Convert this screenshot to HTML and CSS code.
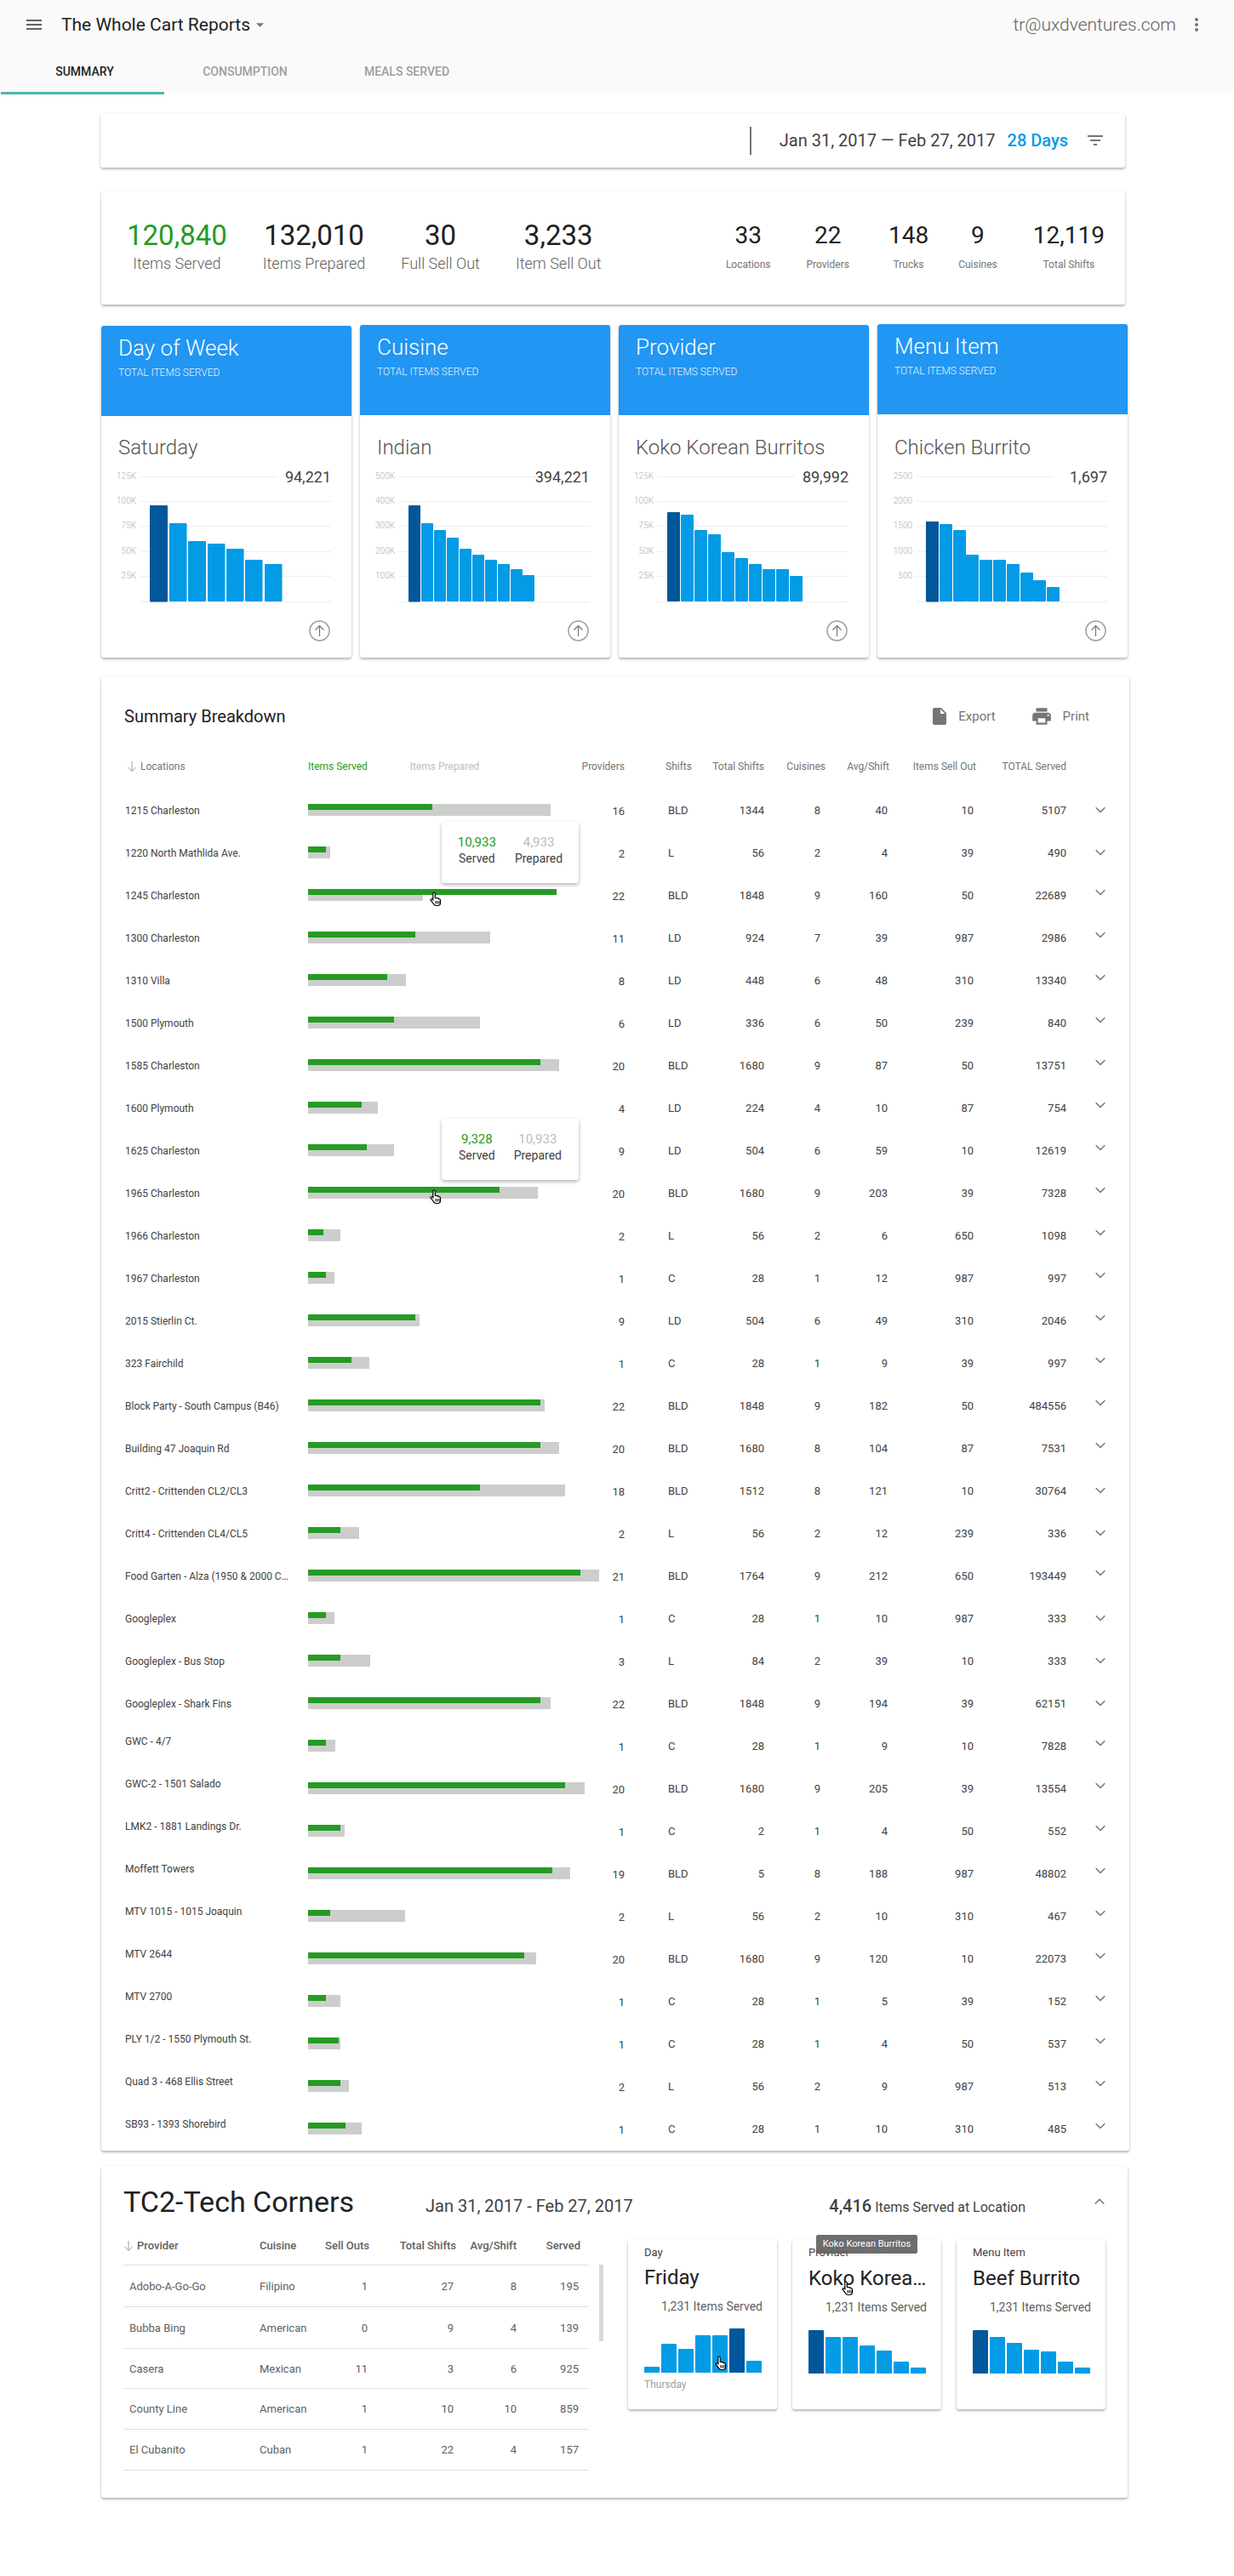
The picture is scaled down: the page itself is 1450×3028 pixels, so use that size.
FILE: index.html
```html
<!DOCTYPE html>
<html lang="en">
<head>
    <meta charset="UTF-8">
    <title>The Whole Cart Reports</title>
    <link rel="stylesheet" href="styles.css">
</head>
<body>
<svg class="sprites" width="0" height="0">
    <symbol id="chev" viewBox="0 0 12 12"><path d="M.7 3.2 6 8.5l5.3-5.3" fill="none" stroke="#757575" stroke-width="1.5"/></symbol>
    <symbol id="chev-up" viewBox="0 0 12 12"><path d="M.7 8.5 6 3.2l5.3 5.3" fill="none" stroke="#757575" stroke-width="1.5"/></symbol>
    <symbol id="sort" viewBox="0 0 12 14"><path d="M6 1v11.5M1.5 8 6 12.5 10.500 8" fill="none" stroke="#9e9e9e" stroke-width="1"/></symbol>
    <symbol id="up" viewBox="0 0 25 25"><circle cx="12.500" cy="12.500" r="11.500" fill="none" stroke="#9e9e9e" stroke-width="1.500"/><path d="M12.500 19V6.500M7.500 11.500l5-5 5 5" fill="none" stroke="#757575" stroke-width="1.200"/></symbol>
    <symbol id="hand" viewBox="0 0 14 18"><path d="M5 1c.8 0 1.300.6 1.300 1.400v5l1-.1c.5 0 .9.2 1 .5.5-.2 1.200 0 1.400.5.6-.2 1.300.1 1.500.7.6-.1 1.300.3 1.300 1.100v3.200c0 1.800-1.300 3.200-3.100 3.200H7.500c-1 0-1.800-.4-2.400-1.200L1.300 10.500c-.5-.6-.3-1.300.2-1.600.5-.3 1.100-.2 1.600.3l.7.7V2.400C3.800 1.600 4.300 1 5 1z" fill="#fff" stroke="#000" stroke-width="1.200"/><path d="M7 11v3.500M9 11v3.500M11 11v3.500" stroke="#000" stroke-width="1"/></symbol>
</svg>

<header class="topbar">
    <div class="topbar-row">
        <svg class="icon menu-icon" viewBox="0 0 24 24"><path d="M3 18h18v-2H3v2zm0-5h18v-2H3v2zm0-7v2h18V6H3z"/></svg>
        <span class="app-title">The Whole Cart Reports</span>
        <svg class="caret" viewBox="0 0 10 5"><path d="M0 0h10L5 5z"/></svg>
        <span class="email">tr@uxdventures.com</span>
        <svg class="icon" viewBox="0 0 24 24"><path d="M12 8c1.100 0 2-.9 2-2s-.9-2-2-2-2 .9-2 2 .9 2 2 2zm0 2c-1.100 0-2 .9-2 2s.9 2 2 2 2-.9 2-2-.9-2-2-2zm0 6c-1.100 0-2 .9-2 2s.9 2 2 2 2-.9 2-2-.9-2-2-2z"/></svg>
    </div>
    <nav class="tabs">
        <a class="tab active">Summary</a>
        <a class="tab">Consumption</a>
        <a class="tab">Meals Served</a>
    </nav>
</header>

<main class="page">
    <section class="card date-bar">
        <span class="divider"></span>
        <span class="date-range">Jan 31, 2017 — Feb 27, 2017</span>
        <span class="days">28 Days</span>
        <svg class="icon" viewBox="0 0 24 24"><path d="M10 18h4v-2h-4v2zM3 6v2h18V6H3zm3 7h12v-2H6v2z"/></svg>
    </section>

    <section class="card stats">
        <div class="stat-group">
            <div class="stat"><b class="green">120,840</b><span>Items Served</span></div>
            <div class="stat"><b>132,010</b><span>Items Prepared</span></div>
            <div class="stat"><b>30</b><span>Full Sell Out</span></div>
            <div class="stat"><b>3,233</b><span>Item Sell Out</span></div>
        </div>
        <div class="stat-group small">
            <div class="stat"><b>33</b><span>Locations</span></div>
            <div class="stat"><b>22</b><span>Providers</span></div>
            <div class="stat trucks"><b>148</b><span>Trucks</span></div>
            <div class="stat"><b>9</b><span>Cuisines</span></div>
            <div class="stat"><b>12,119</b><span>Total Shifts</span></div>
        </div>
    </section>

    <section class="top-cards">
        <div class="card top-card h-390">
            <div class="top-head"><h2>Day of Week</h2><p>Total Items Served</p></div>
            <div class="top-body">
                <div class="top-name">Saturday</div>
                <svg class="chart" width="254" height="160">
                    <g class="grid"><path d="M26 8.500h161M26 37.500h224M26 66.500h224M26 96.500h224M26 125.500h224M26 155.500h224"/></g>
                    <g class="axis"><text x="21" y="11">125K</text><text x="21" y="40">100K</text><text x="21" y="69">75K</text><text x="21" y="99">50K</text><text x="21" y="128">25K</text></g>
                    <text class="chart-val" x="250" y="14.500">94,221</text>
                    <rect class="dark" x="37" y="42" width="21" height="113.500" rx="1"/>
                    <rect class="lite" x="60" y="63" width="20.500" height="92" rx="1"/>
                    <rect class="lite" x="82" y="84" width="21" height="71" rx="1"/>
                    <rect class="lite" x="105" y="87" width="20.500" height="68" rx="1"/>
                    <rect class="lite" x="127" y="93" width="20.500" height="62" rx="1"/>
                    <rect class="lite" x="149" y="106" width="20.500" height="49" rx="1"/>
                    <rect class="lite" x="172" y="111" width="20.500" height="44" rx="1"/>
                </svg>
                <svg class="up-btn"><use href="#up"/></svg>
            </div>
        </div>
        <div class="card top-card h-391">
            <div class="top-head"><h2>Cuisine</h2><p>Total Items Served</p></div>
            <div class="top-body">
                <div class="top-name">Indian</div>
                <svg class="chart" width="254" height="160">
                    <g class="grid"><path d="M26 8.500h161M26 37.500h224M26 66.500h224M26 96.500h224M26 125.500h224M26 155.500h224"/></g>
                    <g class="axis"><text x="21" y="11">500K</text><text x="21" y="40">400K</text><text x="21" y="69">300K</text><text x="21" y="99">200K</text><text x="21" y="128">100K</text></g>
                    <text class="chart-val" x="250" y="14.500">394,221</text>
                    <rect class="dark" x="37" y="42" width="14" height="113.500" rx="1"/>
                    <rect class="lite" x="52" y="63" width="14" height="92" rx="1"/>
                    <rect class="lite" x="67" y="71" width="14" height="84" rx="1"/>
                    <rect class="lite" x="82" y="80" width="14" height="75" rx="1"/>
                    <rect class="lite" x="97" y="93" width="14" height="62" rx="1"/>
                    <rect class="lite" x="112" y="100" width="14" height="55" rx="1"/>
                    <rect class="lite" x="127" y="106" width="14" height="49" rx="1"/>
                    <rect class="lite" x="142" y="111" width="14" height="44" rx="1"/>
                    <rect class="lite" x="157" y="117" width="14" height="38" rx="1"/>
                    <rect class="lite" x="171" y="124" width="14" height="31" rx="1"/>
                </svg>
                <svg class="up-btn"><use href="#up"/></svg>
            </div>
        </div>
        <div class="card top-card h-391">
            <div class="top-head"><h2>Provider</h2><p>Total Items Served</p></div>
            <div class="top-body">
                <div class="top-name">Koko Korean Burritos</div>
                <svg class="chart" width="254" height="160">
                    <g class="grid"><path d="M26 8.500h161M26 37.500h224M26 66.500h224M26 96.500h224M26 125.500h224M26 155.500h224"/></g>
                    <g class="axis"><text x="21" y="11">125K</text><text x="21" y="40">100K</text><text x="21" y="69">75K</text><text x="21" y="99">50K</text><text x="21" y="128">25K</text></g>
                    <text class="chart-val" x="250" y="14.500">89,992</text>
                    <rect class="dark" x="37" y="50" width="15" height="105" rx="1"/>
                    <rect class="lite" x="53" y="53" width="15" height="102" rx="1"/>
                    <rect class="lite" x="69" y="71" width="15" height="84" rx="1"/>
                    <rect class="lite" x="85" y="76" width="15" height="79" rx="1"/>
                    <rect class="lite" x="101" y="97" width="15" height="58" rx="1"/>
                    <rect class="lite" x="117" y="104" width="15" height="51" rx="1"/>
                    <rect class="lite" x="133" y="111" width="15" height="44" rx="1"/>
                    <rect class="lite" x="149" y="117" width="15" height="38" rx="1"/>
                    <rect class="lite" x="165" y="117" width="15" height="38" rx="1"/>
                    <rect class="lite" x="181" y="125" width="15" height="30" rx="1"/>
                </svg>
                <svg class="up-btn"><use href="#up"/></svg>
            </div>
        </div>
        <div class="card top-card h-392">
            <div class="top-head"><h2>Menu Item</h2><p>Total Items Served</p></div>
            <div class="top-body">
                <div class="top-name">Chicken Burrito</div>
                <svg class="chart" width="254" height="160">
                    <g class="grid"><path d="M26 8.500h161M26 37.500h224M26 66.500h224M26 96.500h224M26 125.500h224M26 155.500h224"/></g>
                    <g class="axis"><text x="21" y="11">2500</text><text x="21" y="40">2000</text><text x="21" y="69">1500</text><text x="21" y="99">1000</text><text x="21" y="128">500</text></g>
                    <text class="chart-val" x="250" y="14.500">1,697</text>
                    <rect class="dark" x="37" y="61" width="15" height="94.500" rx="1"/>
                    <rect class="lite" x="53" y="64" width="15" height="91" rx="1"/>
                    <rect class="lite" x="69" y="71" width="15" height="84" rx="1"/>
                    <rect class="lite" x="84" y="100" width="15" height="55" rx="1"/>
                    <rect class="lite" x="100" y="106" width="15" height="49" rx="1"/>
                    <rect class="lite" x="116" y="106" width="15" height="49" rx="1"/>
                    <rect class="lite" x="132" y="111" width="15" height="44" rx="1"/>
                    <rect class="lite" x="148" y="121" width="15" height="34" rx="1"/>
                    <rect class="lite" x="163" y="130" width="15" height="25" rx="1"/>
                    <rect class="lite" x="179" y="138" width="15" height="17" rx="1"/>
                </svg>
                <svg class="up-btn"><use href="#up"/></svg>
            </div>
        </div>
    </section>

    <section class="card breakdown">
        <div class="breakdown-title">
            <h3>Summary Breakdown</h3>
            <div class="actions">
                <span class="action"><svg class="icon" viewBox="0 0 24 24"><path d="M6 2c-1.100 0-1.990.9-1.990 2L4 20c0 1.100.89 2 1.990 2H18c1.100 0 2-.9 2-2V8l-6-6H6zm7 7V3.500L18.500 9H13z"/></svg>Export</span>
                <span class="action print"><svg class="icon" viewBox="0 0 24 24"><path d="M19 8H5c-1.660 0-3 1.340-3 3v6h4v4h12v-4h4v-6c0-1.660-1.340-3-3-3zm-3 11H8v-5h8v5zm3-7c-.55 0-1-.45-1-1s.45-1 1-1 1 .45 1 1-.45 1-1 1zm-1-9H6v4h12V3z"/></svg>Print</span>
            </div>
        </div>
        <div class="row head">
            <span class="loc"><svg class="sort"><use href="#sort"/></svg>Locations</span>
            <span class="legend"><span class="green">Items Served</span><span class="muted">Items Prepared</span></span>
            <span class="prov">Providers</span><span class="shift">Shifts</span><span class="tot">Total Shifts</span><span class="cuis">Cuisines</span><span class="avg">Avg/Shift</span><span class="sell">Items Sell Out</span><span class="total">TOTAL Served</span>
        </div>
        <div class="row flat"><span class="loc">1215 Charleston</span><span class="bar"><i class="prep" style="width:285px"></i><i class="serv" style="width:146px"></i></span><span class="prov">16</span><span class="shift">BLD</span><span class="tot">1344</span><span class="cuis">8</span><span class="avg">40</span><span class="sell">10</span><span class="total">5107</span><svg class="chev"><use href="#chev"/></svg></div>
        <div class="row flat"><span class="loc">1220 North Mathlida Ave.</span><span class="bar"><i class="prep" style="width:26px"></i><i class="serv" style="width:21px"></i></span><span class="prov">2</span><span class="shift">L</span><span class="tot">56</span><span class="cuis">2</span><span class="avg">4</span><span class="sell">39</span><span class="total">490</span><svg class="chev"><use href="#chev"/></svg>
            <div class="bar-tip tip-a"><div><b class="green">10,933</b><span>Served</span></div><div><b class="muted">4,933</b><span>Prepared</span></div></div>
        </div>
        <div class="row"><span class="loc">1245 Charleston</span><span class="bar"><i class="prep" style="width:135px"></i><i class="serv" style="width:292px"></i></span><span class="prov">22</span><span class="shift">BLD</span><span class="tot">1848</span><span class="cuis">9</span><span class="avg">160</span><span class="sell">50</span><span class="total">22689</span><svg class="chev"><use href="#chev"/></svg><svg class="hand hand-row"><use href="#hand"/></svg></div>
        <div class="row"><span class="loc">1300 Charleston</span><span class="bar"><i class="prep" style="width:214px"></i><i class="serv" style="width:126px"></i></span><span class="prov">11</span><span class="shift">LD</span><span class="tot">924</span><span class="cuis">7</span><span class="avg">39</span><span class="sell">987</span><span class="total">2986</span><svg class="chev"><use href="#chev"/></svg></div>
        <div class="row"><span class="loc">1310 Villa</span><span class="bar"><i class="prep" style="width:115px"></i><i class="serv" style="width:93px"></i></span><span class="prov">8</span><span class="shift">LD</span><span class="tot">448</span><span class="cuis">6</span><span class="avg">48</span><span class="sell">310</span><span class="total">13340</span><svg class="chev"><use href="#chev"/></svg></div>
        <div class="row"><span class="loc">1500 Plymouth</span><span class="bar"><i class="prep" style="width:202px"></i><i class="serv" style="width:101px"></i></span><span class="prov">6</span><span class="shift">LD</span><span class="tot">336</span><span class="cuis">6</span><span class="avg">50</span><span class="sell">239</span><span class="total">840</span><svg class="chev"><use href="#chev"/></svg></div>
        <div class="row"><span class="loc">1585 Charleston</span><span class="bar"><i class="prep" style="width:295px"></i><i class="serv" style="width:273px"></i></span><span class="prov">20</span><span class="shift">BLD</span><span class="tot">1680</span><span class="cuis">9</span><span class="avg">87</span><span class="sell">50</span><span class="total">13751</span><svg class="chev"><use href="#chev"/></svg></div>
        <div class="row"><span class="loc">1600 Plymouth</span><span class="bar"><i class="prep" style="width:82px"></i><i class="serv" style="width:63px"></i></span><span class="prov">4</span><span class="shift">LD</span><span class="tot">224</span><span class="cuis">4</span><span class="avg">10</span><span class="sell">87</span><span class="total">754</span><svg class="chev"><use href="#chev"/></svg></div>
        <div class="row"><span class="loc">1625 Charleston</span><span class="bar"><i class="prep" style="width:101px"></i><i class="serv" style="width:69px"></i></span><span class="prov">9</span><span class="shift">LD</span><span class="tot">504</span><span class="cuis">6</span><span class="avg">59</span><span class="sell">10</span><span class="total">12619</span><svg class="chev"><use href="#chev"/></svg>
            <div class="bar-tip tip-b"><div><b class="green">9,328</b><span>Served</span></div><div><b class="muted">10,933</b><span>Prepared</span></div></div>
        </div>
        <div class="row"><span class="loc">1965 Charleston</span><span class="bar"><i class="prep" style="width:270px"></i><i class="serv" style="width:225px"></i></span><span class="prov">20</span><span class="shift">BLD</span><span class="tot">1680</span><span class="cuis">9</span><span class="avg">203</span><span class="sell">39</span><span class="total">7328</span><svg class="chev"><use href="#chev"/></svg><svg class="hand hand-row"><use href="#hand"/></svg></div>
        <div class="row"><span class="loc">1966 Charleston</span><span class="bar"><i class="prep" style="width:38px"></i><i class="serv" style="width:18px"></i></span><span class="prov">2</span><span class="shift">L</span><span class="tot">56</span><span class="cuis">2</span><span class="avg">6</span><span class="sell">650</span><span class="total">1098</span><svg class="chev"><use href="#chev"/></svg></div>
        <div class="row"><span class="loc">1967 Charleston</span><span class="bar"><i class="prep" style="width:31px"></i><i class="serv" style="width:21px"></i></span><span class="prov">1</span><span class="shift">C</span><span class="tot">28</span><span class="cuis">1</span><span class="avg">12</span><span class="sell">987</span><span class="total">997</span><svg class="chev"><use href="#chev"/></svg></div>
        <div class="row"><span class="loc">2015 Stierlin Ct.</span><span class="bar"><i class="prep" style="width:131px"></i><i class="serv" style="width:126px"></i></span><span class="prov">9</span><span class="shift">LD</span><span class="tot">504</span><span class="cuis">6</span><span class="avg">49</span><span class="sell">310</span><span class="total">2046</span><svg class="chev"><use href="#chev"/></svg></div>
        <div class="row"><span class="loc">323 Fairchild</span><span class="bar"><i class="prep" style="width:72px"></i><i class="serv" style="width:51px"></i></span><span class="prov">1</span><span class="shift">C</span><span class="tot">28</span><span class="cuis">1</span><span class="avg">9</span><span class="sell">39</span><span class="total">997</span><svg class="chev"><use href="#chev"/></svg></div>
        <div class="row"><span class="loc">Block Party - South Campus (B46)</span><span class="bar"><i class="prep" style="width:278px"></i><i class="serv" style="width:273px"></i></span><span class="prov">22</span><span class="shift">BLD</span><span class="tot">1848</span><span class="cuis">9</span><span class="avg">182</span><span class="sell">50</span><span class="total">484556</span><svg class="chev"><use href="#chev"/></svg></div>
        <div class="row"><span class="loc">Building 47 Joaquin Rd</span><span class="bar"><i class="prep" style="width:295px"></i><i class="serv" style="width:273px"></i></span><span class="prov">20</span><span class="shift">BLD</span><span class="tot">1680</span><span class="cuis">8</span><span class="avg">104</span><span class="sell">87</span><span class="total">7531</span><svg class="chev"><use href="#chev"/></svg></div>
        <div class="row flat"><span class="loc">Critt2 - Crittenden CL2/CL3</span><span class="bar"><i class="prep" style="width:302px"></i><i class="serv" style="width:202px"></i></span><span class="prov">18</span><span class="shift">BLD</span><span class="tot">1512</span><span class="cuis">8</span><span class="avg">121</span><span class="sell">10</span><span class="total">30764</span><svg class="chev"><use href="#chev"/></svg></div>
        <div class="row flat"><span class="loc">Critt4 - Crittenden CL4/CL5</span><span class="bar"><i class="prep" style="width:60px"></i><i class="serv" style="width:38px"></i></span><span class="prov">2</span><span class="shift">L</span><span class="tot">56</span><span class="cuis">2</span><span class="avg">12</span><span class="sell">239</span><span class="total">336</span><svg class="chev"><use href="#chev"/></svg></div>
        <div class="row"><span class="loc">Food Garten - Alza (1950 &amp; 2000 Charleston)</span><span class="bar"><i class="prep" style="width:342px"></i><i class="serv" style="width:320px"></i></span><span class="prov">21</span><span class="shift">BLD</span><span class="tot">1764</span><span class="cuis">9</span><span class="avg">212</span><span class="sell">650</span><span class="total">193449</span><svg class="chev"><use href="#chev"/></svg></div>
        <div class="row flat"><span class="loc">Googleplex</span><span class="bar"><i class="prep" style="width:31px"></i><i class="serv" style="width:21px"></i></span><span class="prov">1</span><span class="shift">C</span><span class="tot">28</span><span class="cuis">1</span><span class="avg">10</span><span class="sell">987</span><span class="total">333</span><svg class="chev"><use href="#chev"/></svg></div>
        <div class="row flat"><span class="loc">Googleplex - Bus Stop</span><span class="bar"><i class="prep" style="width:73px"></i><i class="serv" style="width:38px"></i></span><span class="prov">3</span><span class="shift">L</span><span class="tot">84</span><span class="cuis">2</span><span class="avg">39</span><span class="sell">10</span><span class="total">333</span><svg class="chev"><use href="#chev"/></svg></div>
        <div class="row flat"><span class="loc">Googleplex - Shark Fins</span><span class="bar"><i class="prep" style="width:285px"></i><i class="serv" style="width:273px"></i></span><span class="prov">22</span><span class="shift">BLD</span><span class="tot">1848</span><span class="cuis">9</span><span class="avg">194</span><span class="sell">39</span><span class="total">62151</span><svg class="chev"><use href="#chev"/></svg></div>
        <div class="row lift"><span class="loc">GWC - 4/7</span><span class="bar"><i class="prep" style="width:32px"></i><i class="serv" style="width:21px"></i></span><span class="prov">1</span><span class="shift">C</span><span class="tot">28</span><span class="cuis">1</span><span class="avg">9</span><span class="sell">10</span><span class="total">7828</span><svg class="chev"><use href="#chev"/></svg></div>
        <div class="row lift"><span class="loc">GWC-2 - 1501 Salado</span><span class="bar"><i class="prep" style="width:325px"></i><i class="serv" style="width:302px"></i></span><span class="prov">20</span><span class="shift">BLD</span><span class="tot">1680</span><span class="cuis">9</span><span class="avg">205</span><span class="sell">39</span><span class="total">13554</span><svg class="chev"><use href="#chev"/></svg></div>
        <div class="row lift"><span class="loc">LMK2 - 1881 Landings Dr.</span><span class="bar"><i class="prep" style="width:43px"></i><i class="serv" style="width:38px"></i></span><span class="prov">1</span><span class="shift">C</span><span class="tot">2</span><span class="cuis">1</span><span class="avg">4</span><span class="sell">50</span><span class="total">552</span><svg class="chev"><use href="#chev"/></svg></div>
        <div class="row lift"><span class="loc">Moffett Towers</span><span class="bar"><i class="prep" style="width:308px"></i><i class="serv" style="width:287px"></i></span><span class="prov">19</span><span class="shift">BLD</span><span class="tot">5</span><span class="cuis">8</span><span class="avg">188</span><span class="sell">987</span><span class="total">48802</span><svg class="chev"><use href="#chev"/></svg></div>
        <div class="row lift"><span class="loc">MTV 1015 - 1015 Joaquin</span><span class="bar"><i class="prep" style="width:114px"></i><i class="serv" style="width:26px"></i></span><span class="prov">2</span><span class="shift">L</span><span class="tot">56</span><span class="cuis">2</span><span class="avg">10</span><span class="sell">310</span><span class="total">467</span><svg class="chev"><use href="#chev"/></svg></div>
        <div class="row lift"><span class="loc">MTV 2644</span><span class="bar"><i class="prep" style="width:268px"></i><i class="serv" style="width:254px"></i></span><span class="prov">20</span><span class="shift">BLD</span><span class="tot">1680</span><span class="cuis">9</span><span class="avg">120</span><span class="sell">10</span><span class="total">22073</span><svg class="chev"><use href="#chev"/></svg></div>
        <div class="row lift"><span class="loc">MTV 2700</span><span class="bar"><i class="prep" style="width:38px"></i><i class="serv" style="width:21px"></i></span><span class="prov">1</span><span class="shift">C</span><span class="tot">28</span><span class="cuis">1</span><span class="avg">5</span><span class="sell">39</span><span class="total">152</span><svg class="chev"><use href="#chev"/></svg></div>
        <div class="row lift"><span class="loc">PLY 1/2 - 1550 Plymouth St.</span><span class="bar"><i class="prep" style="width:38px"></i><i class="serv" style="width:36px"></i></span><span class="prov">1</span><span class="shift">C</span><span class="tot">28</span><span class="cuis">1</span><span class="avg">4</span><span class="sell">50</span><span class="total">537</span><svg class="chev"><use href="#chev"/></svg></div>
        <div class="row lift"><span class="loc">Quad 3 - 468 Ellis Street</span><span class="bar"><i class="prep" style="width:48px"></i><i class="serv" style="width:38px"></i></span><span class="prov">2</span><span class="shift">L</span><span class="tot">56</span><span class="cuis">2</span><span class="avg">9</span><span class="sell">987</span><span class="total">513</span><svg class="chev"><use href="#chev"/></svg></div>
        <div class="row lift"><span class="loc">SB93 - 1393 Shorebird</span><span class="bar"><i class="prep" style="width:63px"></i><i class="serv" style="width:44px"></i></span><span class="prov">1</span><span class="shift">C</span><span class="tot">28</span><span class="cuis">1</span><span class="avg">10</span><span class="sell">310</span><span class="total">485</span><svg class="chev"><use href="#chev"/></svg></div>
    </section>

    <section class="card location">
        <div class="location-head">
            <h2>TC2-Tech Corners</h2>
            <span class="location-date">Jan 31, 2017 - Feb 27, 2017</span>
            <span class="location-total"><b>4,416</b> Items Served at Location</span>
            <svg class="chev-up"><use href="#chev-up"/></svg>
        </div>
        <div class="location-body">
            <div class="providers">
                <div class="p-row p-head"><span><svg class="sort"><use href="#sort"/></svg>Provider</span><span>Cuisine</span><span class="r">Sell Outs</span><span class="r">Total Shifts</span><span class="r">Avg/Shift</span><span class="r">Served</span></div>
                <div class="p-row h49"><span>Adobo-A-Go-Go</span><span>Filipino</span><span class="r">1</span><span class="r">27</span><span class="r">8</span><span class="r">195</span></div>
                <div class="p-row h49"><span>Bubba Bing</span><span>American</span><span class="r">0</span><span class="r">9</span><span class="r">4</span><span class="r">139</span></div>
                <div class="p-row h47"><span>Casera</span><span>Mexican</span><span class="r">11</span><span class="r">3</span><span class="r">6</span><span class="r">925</span></div>
                <div class="p-row h48"><span>County Line</span><span>American</span><span class="r">1</span><span class="r">10</span><span class="r">10</span><span class="r">859</span></div>
                <div class="p-row h48"><span>El Cubanito</span><span>Cuban</span><span class="r">1</span><span class="r">22</span><span class="r">4</span><span class="r">157</span></div>
            </div>
            <div class="scroll-thumb"></div>
            <div class="minis">
                <div class="card mini">
                    <div class="mini-label">Day</div>
                    <div class="mini-title">Friday</div>
                    <div class="mini-sub">1,231 Items Served</div>
                    <div class="mini-bars">
                        <i style="height:7px"></i><i style="height:34px"></i><i style="height:28px"></i><i style="height:44px"></i><i style="height:44px"></i><i class="on" style="height:52px"></i><i style="height:14px"></i>
                    </div>
                    <div class="mini-foot">Thursday</div>
                    <svg class="hand hand-bar"><use href="#hand"/></svg>
                </div>
                <div class="card mini low">
                    <div class="mini-label">Provider</div>
                    <div class="mini-title">Koko Korean Burritos</div>
                    <div class="mini-sub">1,231 Items Served</div>
                    <div class="mini-bars">
                        <i class="on" style="height:51px"></i><i style="height:43px"></i><i style="height:43px"></i><i style="height:33px"></i><i style="height:27px"></i><i style="height:14px"></i><i style="height:7px"></i>
                    </div>
                    <div class="mini-tip">Koko Korean Burritos</div>
                    <svg class="hand hand-title"><use href="#hand"/></svg>
                </div>
                <div class="card mini low">
                    <div class="mini-label">Menu Item</div>
                    <div class="mini-title">Beef Burrito</div>
                    <div class="mini-sub">1,231 Items Served</div>
                    <div class="mini-bars">
                        <i class="on" style="height:51px"></i><i style="height:43px"></i><i style="height:36px"></i><i style="height:28px"></i><i style="height:26px"></i><i style="height:14px"></i><i style="height:7px"></i>
                    </div>
                </div>
            </div>
        </div>
    </section>
</main>
</body>
</html>
```

FILE: styles.css
```css
*{
    margin: 0;
    padding: 0;
    box-sizing: border-box;
}
body{
    font-family: Roboto, "Liberation Sans", sans-serif;
    background: #fff;
    color: #424242;
}
.sprites{
    position: absolute;
}
.icon{
    width: 24px;
    height: 24px;
    fill: #757575;
    flex: none;
}
.green{
    color: #259b24;
}
.muted{
    color: #bdbdbd;
}

/* header */
.topbar{
    height: 108px;
    background: #fafafa;
}
.topbar-row{
    height: 58px;
    display: flex;
    align-items: center;
    padding: 0 32px 0 28px;
}
.menu-icon{
    margin-right: 20px;
    fill: #616161;
}
.app-title{
    font-size: 21px;
    color: #212121;
}
.caret{
    width: 9px;
    height: 5px;
    margin-left: 7px;
    fill: #757575;
}
.email{
    margin-left: auto;
    margin-right: 12px;
    font-size: 21px;
    font-weight: 300;
    color: #616161;
}
.tabs{
    display: flex;
    align-items: flex-start;
}
.tab{
    width: 190px;
    height: 50px;
    line-height: 52px;
    text-align: center;
    font-size: 14px;
    font-weight: 500;
    text-transform: uppercase;
    color: #9e9e9e;
}
.tab.active{
    width: 192px;
    height: 53px;
    margin-left: 1px;
    padding-left: 5px;
    color: #212121;
    border-bottom: 3px solid #4db6ac;
}

/* cards */
.page{
    padding: 25px 0 92px 118px;
}
.card{
    background: #fff;
    border-radius: 3px;
    box-shadow: 0 2px 3px rgba(0,0,0,.28), 0 0 2px rgba(0,0,0,.08);
}
.date-bar{
    width: 1204px;
    height: 64px;
    display: flex;
    align-items: center;
    justify-content: flex-end;
    padding-right: 23px;
}
.divider{
    width: 2px;
    height: 33px;
    background: #757575;
    margin-right: 33px;
}
.date-range{
    font-size: 20px;
    margin-right: 14px;
}
.days{
    font-size: 20px;
    font-weight: 500;
    color: #039be5;
    margin-right: 20px;
}
.stats{
    width: 1203px;
    height: 134px;
    margin: 27px 0 0 1px;
    padding: 0 24px 0 30px;
    display: flex;
    justify-content: space-between;
}
.stat-group{
    display: flex;
    gap: 42px;
    padding-top: 34px;
}
.stat{
    display: flex;
    flex-direction: column;
    align-items: center;
}
.stat b{
    font-size: 33px;
    font-weight: 400;
    line-height: 38px;
    color: #212121;
}
.stat b.green{
    color: #259b24;
}
.stat span{
    font-size: 18px;
    font-weight: 300;
    line-height: 22px;
    margin-top: 3px;
    color: #616161;
}
.small{
    padding-top: 38px;
}
.small .stat b{
    font-size: 28px;
    line-height: 30px;
}
.small .stat span{
    font-size: 12px;
    font-weight: 400;
    line-height: 16px;
    margin-top: 11px;
    color: #757575;
}
.trucks{
    margin: 0 -7px 0 4px;
}

/* blue cards */
.top-cards{
    display: flex;
    align-items: flex-end;
    gap: 10px;
    height: 392px;
    margin: 23px 0 0 1px;
}
.top-card{
    width: 294px;
    display: flex;
    flex-direction: column;
}
.h-390{
    height: 390px;
}
.h-391{
    height: 391px;
}
.h-392{
    height: 392px;
}
.top-head{
    height: 106px;
    flex: none;
    padding: 10px 20px 0;
    background: #2196f3;
    border-radius: 3px 3px 0 0;
    color: #fff;
}
.top-head h2{
    font-size: 26px;
    font-weight: 300;
    line-height: 32px;
}
.top-head p{
    font-size: 12px;
    font-weight: 300;
    line-height: 16px;
    margin-top: 5px;
    text-transform: uppercase;
    opacity: .9;
}
.top-body{
    flex: 1;
    display: flex;
    flex-direction: column;
    justify-content: flex-end;
    padding: 0 0 19px 20px;
}
.top-name{
    font-size: 24px;
    font-weight: 300;
    line-height: 30px;
    margin-bottom: 11px;
    color: #555;
}
.chart{
    display: block;
    overflow: visible;
}
.grid path{
    stroke: #eee;
    fill: none;
}
.axis text{
    font-size: 10px;
    font-weight: 300;
    fill: #b0b0b0;
    text-anchor: end;
}
.chart-val{
    font-size: 18px;
    fill: #424242;
    text-anchor: end;
}
.dark{
    fill: #01579b;
}
.lite{
    fill: #039be5;
}
.up-btn{
    display: block;
    width: 25px;
    height: 25px;
    margin: 17px 0 0 224px;
}

/* summary breakdown */
.breakdown{
    width: 1208px;
    height: 1733px;
    margin: 22px 0 0 1px;
    padding-top: 32px;
}
.breakdown-title{
    height: 30px;
    display: flex;
    align-items: center;
    justify-content: space-between;
    padding: 0 47px 0 27px;
}
.breakdown-title h3{
    font-size: 20px;
    font-weight: 400;
    color: #212121;
}
.actions{
    display: flex;
    gap: 41px;
}
.action{
    display: flex;
    align-items: center;
    gap: 10px;
    font-size: 15px;
    color: #757575;
}
.print .icon{
    width: 26px;
    height: 26px;
}
.print{
    gap: 12px;
}
.row{
    position: relative;
    height: 50px;
    display: grid;
    grid-template-columns: 243px 330px 42px 101px 63px 72px 75px 102px 106px 46px;
    align-items: center;
    font-size: 13px;
    color: #424242;
}
.row.head{
    height: 28px;
    margin: 30px 0 12px;
    font-size: 12px;
    color: #757575;
}
.loc{
    padding: 2px 18px 0 28px;
    font-size: 12px;
    white-space: nowrap;
    overflow: hidden;
    text-overflow: ellipsis;
}
.head .loc{
    display: flex;
    align-items: center;
    overflow: visible;
    padding: 0 18px 0 30px;
    gap: 4px;
}
.sort{
    width: 12px;
    height: 14px;
    flex: none;
}
.legend{
    display: flex;
    gap: 50px;
    white-space: nowrap;
}
.bar{
    display: block;
    position: relative;
    height: 14px;
}
.prep{
    display: block;
    height: 14px;
    background: #cccecb;
}
.serv{
    position: absolute;
    left: 0;
    top: 0;
    height: 7px;
    background: #259b24;
}
.prov,.tot,.cuis,.avg,.sell,.total{
    text-align: right;
    white-space: nowrap;
}
.head .prov,.head .tot,.head .cuis,.head .avg,.head .sell,.head .total{
    padding-right: 0;
    justify-self: end;
}
.prov{
    position: relative;
    top: 1px;
}
.head .prov{
    top: 0;
}
.shift{
    padding-left: 51px;
}
.head .shift{
    padding-left: 48px;
}
.cuis{
    padding-right: 6px;
}
.avg{
    padding-right: 2px;
}
.sell{
    padding-right: 3px;
}
.chev{
    width: 12px;
    height: 12px;
    justify-self: end;
    margin-bottom: 6px;
}
.flat .chev{
    margin-bottom: 0;
}
.lift .loc{
    padding-top: 0;
    padding-bottom: 10px;
}

/* hover bubbles over the table */
.bar-tip{
    position: absolute;
    left: 400px;
    width: 161px;
    height: 72px;
    background: #fff;
    border-radius: 3px;
    box-shadow: 0 2px 4px rgba(0,0,0,.3);
    display: flex;
    align-items: flex-start;
    justify-content: center;
    gap: 22px;
    padding-top: 15px;
    z-index: 2;
}
.tip-a{
    top: -11px;
}
.tip-b{
    top: -12px;
}
.bar-tip div{
    display: flex;
    flex-direction: column;
    align-items: center;
    font-size: 14px;
}
.bar-tip b{
    font-size: 15px;
    font-weight: 400;
    line-height: 19px;
}
.bar-tip span{
    line-height: 19px;
}
.hand{
    position: absolute;
    width: 14px;
    height: 18px;
    z-index: 3;
}
.hand-row{
    left: 386px;
    top: 21px;
}

/* location section */
.location{
    width: 1206px;
    height: 390px;
    margin: 18px 0 0 1px;
    padding: 20px 26px 0;
}
.location-head{
    display: flex;
    align-items: baseline;
}
.location-head h2{
    font-size: 34px;
    font-weight: 400;
    line-height: 44px;
    color: #212121;
}
.location-date{
    font-size: 20px;
    margin-left: 84px;
}
.location-total{
    margin-left: auto;
    font-size: 16px;
}
.location-total b{
    font-size: 20px;
    font-weight: 500;
}
.chev-up{
    width: 12px;
    height: 12px;
    margin: 0 1px 0 81px;
    align-self: center;
}
.location-body{
    display: flex;
    margin-top: 22px;
}
.providers{
    width: 547px;
    flex: none;
}
.p-row{
    display: grid;
    grid-template-columns: 160px 65px 64px 102px 71px 75px;
    align-items: center;
    height: 48px;
    border-bottom: 1px solid #e0e0e0;
    font-size: 13px;
    color: #616161;
}
.p-row span:first-child{
    padding-left: 7px;
}
.p-row .r{
    text-align: right;
}
.p-row span:nth-child(3),.p-row span:nth-child(6){
    padding-right: 2px;
}
.p-row span:nth-child(4){
    padding-right: 3px;
}
.p-head{
    height: 31px;
    font-weight: 500;
    padding-bottom: 16px;
}
.p-head span:first-child{
    display: flex;
    align-items: center;
    gap: 4px;
    padding-left: 0;
}
.p-head span:nth-child(n){
    padding-right: 0;
}
.h49{
    height: 49px;
}
.h47{
    height: 47px;
}
.h48{
    height: 48px;
}
.scroll-thumb{
    width: 5px;
    height: 90px;
    margin: 30px 29px 0 12px;
    background: #d8d8d8;
    flex: none;
}
.minis{
    display: flex;
    gap: 18px;
}
.mini{
    position: relative;
    width: 175px;
    height: 200px;
    padding: 8px 17px 0 19px;
}
.mini-label{
    font-size: 13px;
    line-height: 16px;
}
.mini-title{
    font-size: 24px;
    line-height: 32px;
    margin-top: 5px;
    color: #212121;
    white-space: nowrap;
    overflow: hidden;
    text-overflow: ellipsis;
}
.low .mini-title{
    margin-top: 6px;
}
.mini-sub{
    font-size: 14px;
    line-height: 18px;
    margin-top: 9px;
    text-align: right;
    color: #616161;
}
.mini-bars{
    height: 60px;
    margin-top: 9px;
    display: flex;
    align-items: flex-end;
    gap: 2px;
}
.mini-bars i{
    width: 18px;
    background: #039be5;
    border-radius: 1px 1px 0 0;
}
.mini-bars i.on{
    background: #01579b;
}
.mini-foot{
    font-size: 12px;
    line-height: 16px;
    margin-top: 6px;
    color: #9e9e9e;
}
.mini-tip{
    position: absolute;
    left: 28px;
    top: -5px;
    width: 119px;
    height: 22px;
    line-height: 22px;
    text-align: center;
    font-size: 11px;
    color: #fff;
    background: rgba(97,97,97,.92);
    border-radius: 2px;
}
.hand-bar{
    left: 102px;
    top: 137px;
}
.hand-title{
    left: 58px;
    top: 49px;
}
```
